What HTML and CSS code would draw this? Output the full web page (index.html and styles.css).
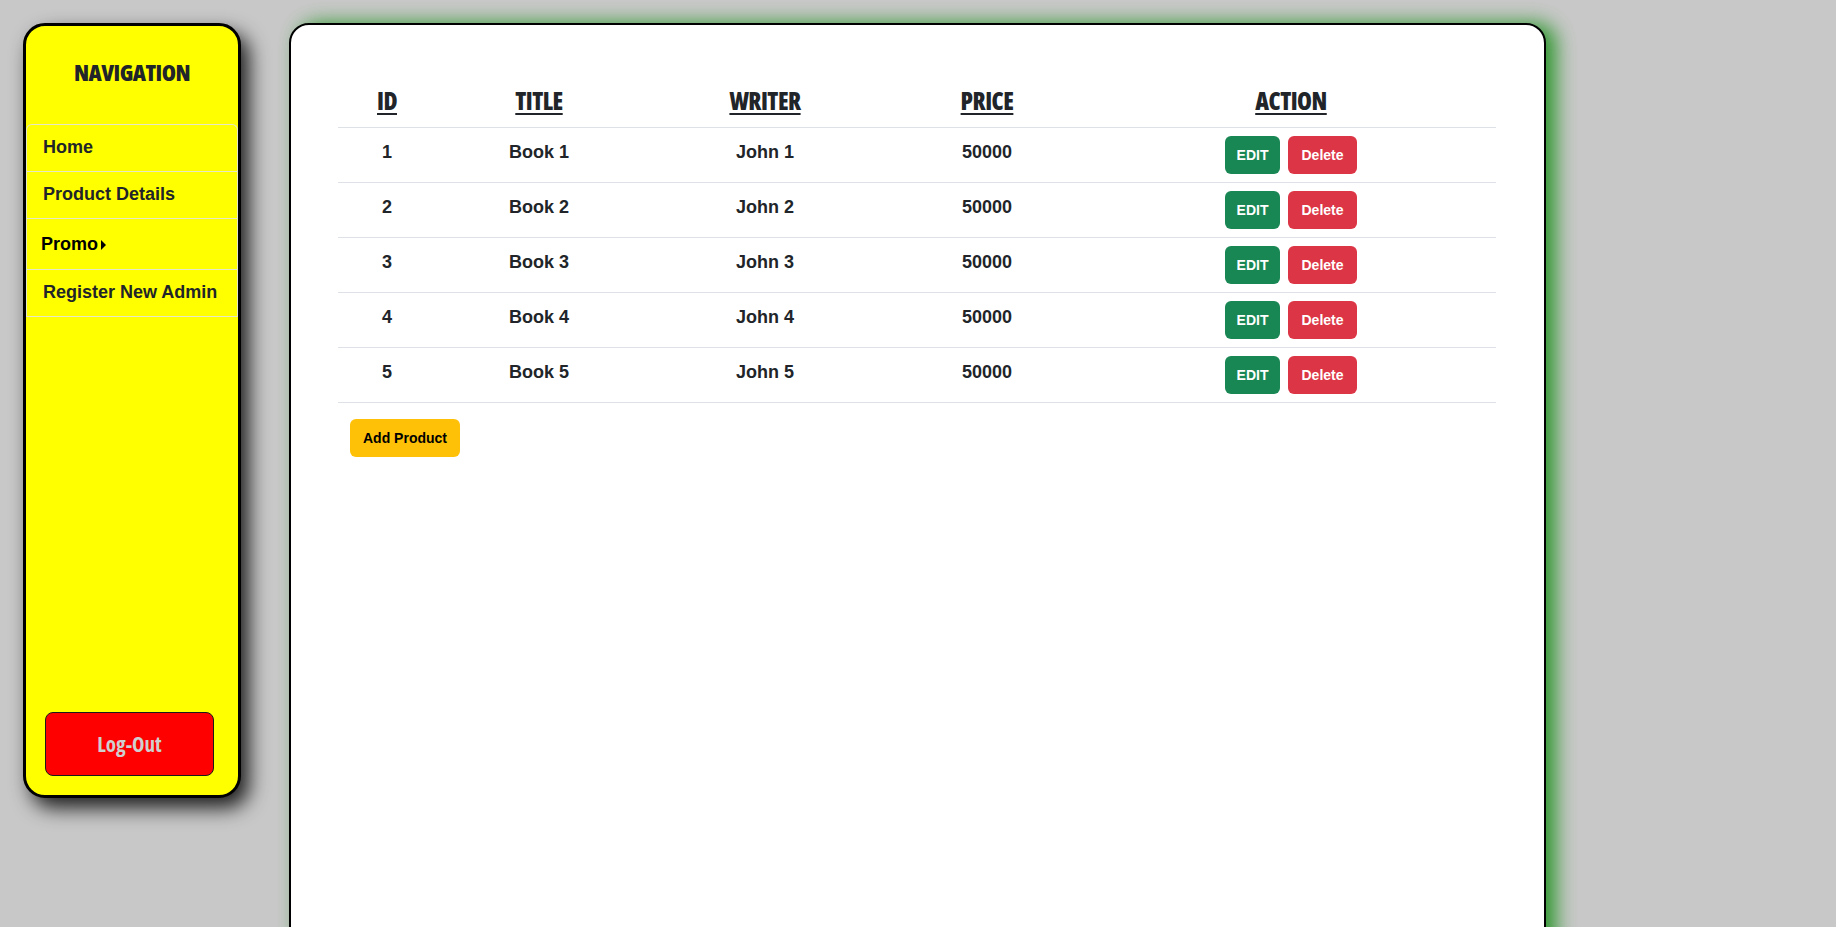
FILE: index.html
```html
<!DOCTYPE html>
<html lang="en">
<head>
<meta charset="utf-8">
<title>Admin - Products</title>
<link rel="stylesheet" href="styles.css">
</head>
<body>
<div class="layout">
  <aside class="sidebar">
    <h2 class="nav-title">NAVIGATION</h2>
    <ul class="nav-list">
      <li class="nav-item"><a href="#">Home</a></li>
      <li class="nav-item"><a href="#">Product Details</a></li>
      <li class="nav-item nav-dropdown"><button class="dropdown-btn">Promo<span class="caret"></span></button></li>
      <li class="nav-item"><a href="#">Register New Admin</a></li>
    </ul>
    <button class="logout">Log-Out</button>
  </aside>
  <main class="content">
    <table class="products">
      <colgroup>
        <col class="c-id"><col class="c-title"><col class="c-writer"><col class="c-price"><col class="c-action">
      </colgroup>
      <thead>
        <tr><th><span class="th-text">ID</span></th><th><span class="th-text">TITLE</span></th><th><span class="th-text">WRITER</span></th><th><span class="th-text">PRICE</span></th><th><span class="th-text">ACTION</span></th></tr>
      </thead>
      <tbody>
        <tr><td>1</td><td>Book 1</td><td>John 1</td><td>50000</td><td class="actions"><button class="btn btn-edit">EDIT</button><button class="btn btn-delete">Delete</button></td></tr>
        <tr><td>2</td><td>Book 2</td><td>John 2</td><td>50000</td><td class="actions"><button class="btn btn-edit">EDIT</button><button class="btn btn-delete">Delete</button></td></tr>
        <tr><td>3</td><td>Book 3</td><td>John 3</td><td>50000</td><td class="actions"><button class="btn btn-edit">EDIT</button><button class="btn btn-delete">Delete</button></td></tr>
        <tr><td>4</td><td>Book 4</td><td>John 4</td><td>50000</td><td class="actions"><button class="btn btn-edit">EDIT</button><button class="btn btn-delete">Delete</button></td></tr>
        <tr><td>5</td><td>Book 5</td><td>John 5</td><td>50000</td><td class="actions"><button class="btn btn-edit">EDIT</button><button class="btn btn-delete">Delete</button></td></tr>
      </tbody>
    </table>
    <button class="btn btn-add">Add Product</button>
  </main>
</div>
</body>
</html>
```

FILE: styles.css
```css
* { box-sizing: border-box; }

html, body {
  margin: 0;
  padding: 0;
  height: 100%;
  overflow: hidden;
}

body {
  background: #c8c8c8;
  font-family: "Liberation Sans", Arial, sans-serif;
  color: #212529;
}

.layout {
  display: flex;
  align-items: flex-start;
  gap: 48px;
  padding: 23px 0 0 23px;
}

.sidebar {
  width: 218px;
  height: 775px;
  flex: none;
  background: #ffff00;
  border: 3px solid #000;
  border-radius: 22px;
  box-shadow: 8px 10px 20px rgba(0, 0, 0, 0.85);
  display: flex;
  flex-direction: column;
}

.nav-title {
  margin: 32px 0 38px;
  font-family: "Open Sans", "DejaVu Sans Condensed", sans-serif;
  font-stretch: 75%;
  font-weight: 800;
  font-size: 23px;
  line-height: 28px;
  letter-spacing: -0.5px;
  text-align: center;
  color: #212529;
}

.nav-list {
  list-style: none;
  margin: 0;
  padding: 0;
  border: 1px solid #e6e6c8;
  border-bottom: none;
  border-radius: 6px 6px 0 0;
}

.nav-item {
  border-bottom: 1px solid #e6e6c8;
}

.nav-item a {
  display: block;
  padding: 9px 16px 10px;
  font-weight: 700;
  font-size: 18px;
  line-height: 27px;
  color: #212529;
  text-decoration: none;
}

.dropdown-btn {
  display: flex;
  align-items: center;
  gap: 3px;
  background: none;
  border: none;
  padding: 12px 14px 11px;
  font-family: "Liberation Sans", Arial, sans-serif;
  font-weight: 700;
  font-size: 18px;
  line-height: 27px;
  color: #000;
}

.caret {
  width: 0;
  height: 0;
  border-top: 5px solid transparent;
  border-bottom: 5px solid transparent;
  border-left: 5px solid #000;
}

.logout {
  margin: auto 0 19px 19px;
  width: 169px;
  height: 64px;
  background: #ff0000;
  border: 1.5px solid #1a1a1a;
  border-radius: 8px;
  font-family: "Open Sans", "DejaVu Sans Condensed", sans-serif;
  font-stretch: 75%;
  font-weight: 700;
  font-size: 21px;
  color: #cfcfcf;
}

.content {
  width: 1257px;
  height: 1000px;
  flex: none;
  background: #fff;
  border: 2px solid #000;
  border-radius: 20px;
  box-shadow: 10px 0 20px rgba(45, 150, 45, 1);
  padding: 50px 47px;
}

.products {
  width: 1158px;
  border-collapse: collapse;
  table-layout: fixed;
}

.c-id { width: 98px; }
.c-title { width: 206px; }
.c-writer { width: 246px; }
.c-price { width: 198px; }
.c-action { width: 410px; }

.products th {
  padding: 8px 0;
  font-family: "Open Sans", "DejaVu Sans Condensed", sans-serif;
  font-stretch: 75%;
  font-weight: 800;
  font-size: 24px;
  line-height: 36px;
  letter-spacing: -0.5px;
  text-align: center;
  color: #212529;
  border-bottom: 1px solid #dee2e6;
}

.th-text {
  text-decoration: underline;
  text-decoration-thickness: 2px;
  text-underline-offset: 3px;
}

.products td {
  padding: 8px 0;
  font-weight: 700;
  font-size: 18px;
  line-height: 32px;
  text-align: center;
  vertical-align: top;
  color: #212529;
  border-bottom: 1px solid #dee2e6;
}

.products td.actions {
  line-height: 0;
}

.btn {
  height: 38px;
  padding: 0;
  border: none;
  border-radius: 6px;
  font-family: "Liberation Sans", Arial, sans-serif;
  font-weight: 700;
  font-size: 14px;
  line-height: 38px;
  color: #fff;
  vertical-align: top;
}

.btn-edit {
  width: 55px;
  background: #198754;
}

.btn-delete {
  width: 69px;
  margin-left: 8px;
  background: #dc3545;
}

.btn-add {
  margin: 16px 0 0 12px;
  width: 110px;
  background: #ffc107;
  color: #000;
}
```
